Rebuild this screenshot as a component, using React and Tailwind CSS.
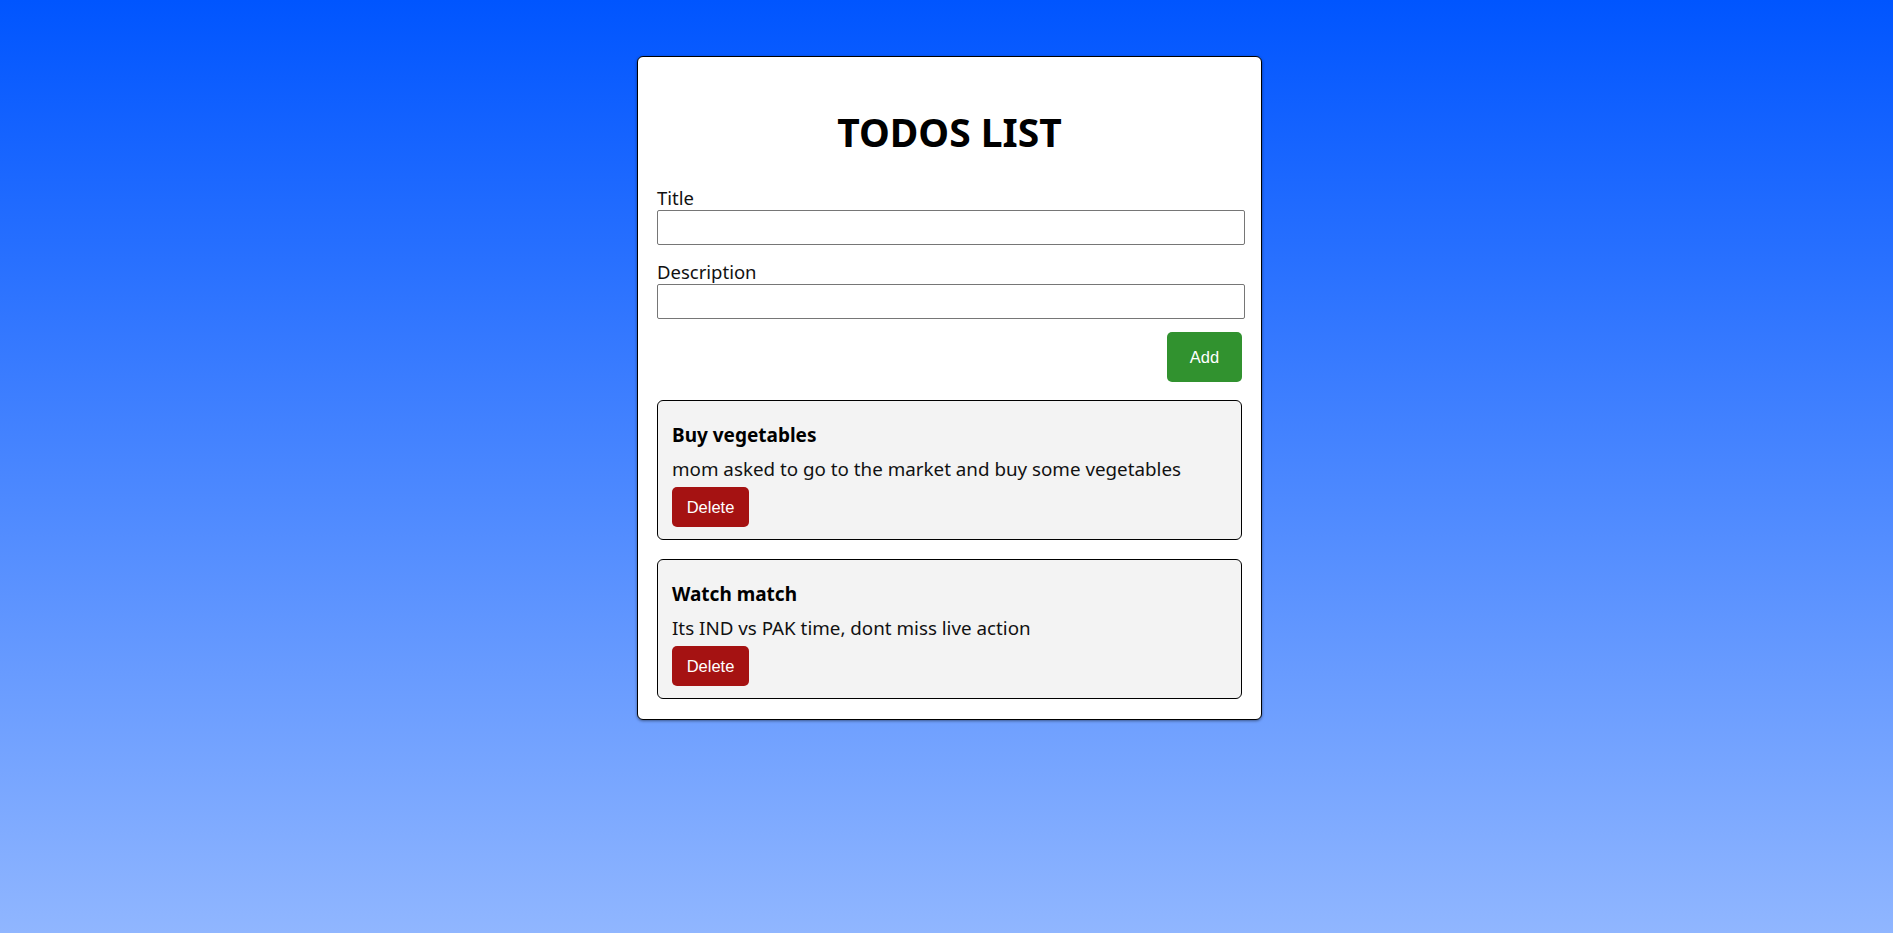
import React, { useState } from "react";

const initialTodos = [
  {
    id: 1,
    title: "Buy vegetables",
    desc: "mom asked to go to the market and buy some vegetables",
  },
  {
    id: 2,
    title: "Watch match",
    desc: "Its IND vs PAK time, dont miss live action",
  },
];

const TodoItem = ({ todo, onDelete }) => {
  return (
    <div className="w-full h-[140px] bg-[#f3f3f3] border border-black rounded-[6px] pt-[21px] px-[14px] flex flex-col items-start">
      <h3 className="text-[19px] leading-[26px] font-bold text-black">
        {todo.title}
      </h3>
      <p className="mt-[8px] text-[18.8px] leading-[26px] text-[#111]">
        {todo.desc}
      </p>
      <button
        onClick={() => onDelete(todo.id)}
        className="mt-[5px] w-[77px] h-[40px] bg-[#a51212] text-white rounded-[5px] text-[16.5px] font-['Liberation_Sans',Arial,sans-serif]"
      >
        Delete
      </button>
    </div>
  );
};

const App = () => {
  const [todos, setTodos] = useState(initialTodos);
  const [title, setTitle] = useState("");
  const [desc, setDesc] = useState("");

  const addTodo = () => {
    if (!title.trim()) return;
    setTodos([...todos, { id: Date.now(), title, desc }]);
    setTitle("");
    setDesc("");
  };

  const deleteTodo = (id) => {
    setTodos(todos.filter((t) => t.id !== id));
  };

  return (
    <div className="w-full min-h-[933px] bg-[linear-gradient(to_bottom,#0055ff,#90b6ff)] pt-[56px] pl-[6px] font-['Noto_Sans',sans-serif]">
      <div className="w-[625px] mx-auto bg-white border border-black rounded-[6px] shadow-[0_1px_3px_rgba(0,0,0,0.45)] pt-[51px] pb-[20px] px-[19px] flex flex-col">
        <h1 className="text-[39px] leading-[48px] font-bold text-black text-center">
          TODOS LIST
        </h1>
        <label
          htmlFor="title"
          className="mt-[30px] text-[18.5px] leading-[24px] text-[#111]"
        >
          Title
        </label>
        <input
          id="title"
          type="text"
          value={title}
          onChange={(e) => setTitle(e.target.value)}
          className="w-[588px] h-[35px] border border-[#767676] rounded-[2px] px-1 outline-none"
        />
        <label
          htmlFor="desc"
          className="mt-[15px] text-[18.5px] leading-[24px] text-[#111]"
        >
          Description
        </label>
        <input
          id="desc"
          type="text"
          value={desc}
          onChange={(e) => setDesc(e.target.value)}
          className="w-[588px] h-[35px] border border-[#767676] rounded-[2px] px-1 outline-none"
        />
        <div className="mt-[13px] flex justify-end">
          <button
            onClick={addTodo}
            className="w-[75px] h-[50px] bg-[#31922f] text-white rounded-[5px] text-[16.5px] font-['Liberation_Sans',Arial,sans-serif]"
          >
            Add
          </button>
        </div>
        <div className="mt-[18px] flex flex-col gap-[19px]">
          {todos.map((todo) => (
            <TodoItem key={todo.id} todo={todo} onDelete={deleteTodo} />
          ))}
        </div>
      </div>
    </div>
  );
};

export default App;
